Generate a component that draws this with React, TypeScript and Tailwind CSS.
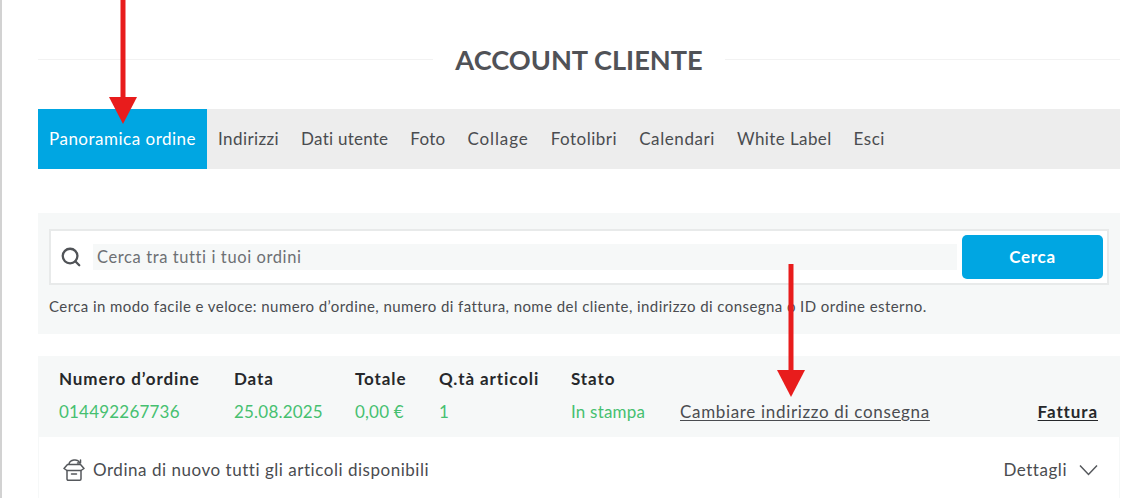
import React from 'react';
import { Search } from 'lucide-react';

const NAV = [
  { label: 'Indirizzi', spacing: 'tracking-[0.4px]' },
  { label: 'Dati utente', spacing: 'tracking-[0.25px]' },
  { label: 'Foto', spacing: 'tracking-[0.25px]' },
  { label: 'Collage', spacing: 'tracking-[0.9px]' },
  { label: 'Fotolibri', spacing: 'tracking-[0.5px]' },
  { label: 'Calendari', spacing: 'tracking-[0.6px]' },
  { label: 'White Label', spacing: 'tracking-[0.4px]' },
  { label: 'Esci', spacing: 'tracking-[0.5px]' },
];

const COLUMNS = [
  { label: 'Numero d’ordine', value: '014492267736', width: 'w-[175px]' },
  { label: 'Data', value: '25.08.2025', width: 'w-[121px]' },
  { label: 'Totale', value: '0,00 €', width: 'w-[84px]' },
  { label: 'Q.tà articoli', value: '1', width: 'w-[132px]' },
  { label: 'Stato', value: 'In stampa', width: 'w-[109px]' },
];

const Arrow = ({ className, h }: { className: string; h: number }) => (
  <svg className={className} viewBox={`0 0 28 ${h}`} fill="#e81c1c">
    <path d={`M11.5 0h5v${h - 27}h-5z`} />
    <path d={`M0 ${h - 27}h28L14 ${h}z`} />
  </svg>
);

const App = () => {
  return (
    <div className="relative h-[498px] w-[1144px] overflow-hidden bg-white font-['Lato',sans-serif] text-[#4a4c50] border-l-2 border-[#d2d2d2]">
      <div className="ml-[36px] w-[1082px]">
        {/* Title */}
        <div className="flex h-[109px] items-center gap-[22px] pt-[10px]">
          <div className="h-[1px] flex-1 bg-[#f2f2f2]" />
          <h1 className="text-[27.2px] font-bold leading-none text-[#505257]">ACCOUNT CLIENTE</h1>
          <div className="h-[1px] flex-1 bg-[#f2f2f2]" />
        </div>

        {/* Tabs */}
        <nav className="flex h-[60px] items-center bg-[#ededed] text-[17px]">
          <a className="flex h-full items-center bg-[#00a6e2] px-[11px] tracking-[0.5px] text-white">Panoramica ordine</a>
          {NAV.map((item) => (
            <a key={item.label} className={`px-[11px] ${item.spacing}`}>{item.label}</a>
          ))}
        </nav>

        {/* Search */}
        <section className="mt-[44px] h-[121px] bg-[#f6f8f8] px-[11px] pt-[16px]">
          <div className="flex h-[56px] items-center border-2 border-[#e8eaea] bg-white">
            <Search className="ml-[9px] h-[22px] w-[22px] text-[#505357]" strokeWidth={2.5} />
            <div className="ml-[11px] flex h-[26px] w-[864px] items-center bg-[#f6f8f8] px-[4px] text-[16.5px] tracking-[0.6px] text-[#6d7074]">
              Cerca tra tutti i tuoi ordini
            </div>
            <button className="ml-[5px] h-[44px] w-[141px] rounded-[5px] bg-[#00a6e2] text-[17px] font-bold tracking-[0.7px] text-white">Cerca</button>
          </div>
          <p className="mt-[11px] text-[15px] leading-[20px] tracking-[0.43px]">
            Cerca in modo facile e veloce: numero d’ordine, numero di fattura, nome del cliente, indirizzo di consegna o ID ordine esterno.
          </p>
        </section>

        {/* Order */}
        <section className="mt-[22px] border-x border-[#f6f8f8]">
          <div className="flex h-[81px] items-stretch bg-[#f6f8f8] pl-[20px] pr-[21px] pt-[13px] text-[17px]">
            {COLUMNS.map((col) => (
              <div key={col.label} className={col.width}>
                <div className="font-bold leading-[20px] tracking-[0.9px] text-[#26282b]">{col.label}</div>
                <div className="mt-[13px] leading-[20px] tracking-[0.2px] text-[#46c070]">{col.value}</div>
              </div>
            ))}
            <div className="flex flex-1 items-start justify-between pt-[33px] leading-[20px]">
              <a className="tracking-[0.67px] underline underline-offset-2">Cambiare indirizzo di consegna</a>
              <a className="font-bold tracking-[0.9px] text-[#26282b] underline underline-offset-2">Fattura</a>
            </div>
          </div>
          <div className="flex h-[61px] items-center justify-between pl-[24px] pr-[21px] pt-[4px] text-[17px] tracking-[0.53px]">
            <div className="flex items-center gap-[8px]">
              <svg className="h-[24px] w-[22px] text-[#55585c]" viewBox="0 0 22 24" fill="none" stroke="currentColor" strokeWidth="1.5" strokeLinejoin="round" strokeLinecap="round">
                <path d="M4 12.5v8.5a1.2 1.2 0 0 0 1.2 1.2h11.6a1.2 1.2 0 0 0 1.2-1.2v-8.5" />
                <path d="M1 10.5l3.5-4h13l3.5 4-3 2H4z" />
                <path d="M8.5 16h5" />
                <path d="M6 6C7 1.5 14.5 0.5 16.5 4.5" />
                <path d="M17.5 2v3h-3" />
              </svg>
              <span>Ordina di nuovo tutti gli articoli disponibili</span>
            </div>
            <div className="flex items-center gap-[12px]">
              <span>Dettagli</span>
              <svg className="h-[12px] w-[19px] text-[#55585c]" viewBox="0 0 19 12" fill="none" stroke="currentColor" strokeWidth="1.5">
                <path d="M1 1.5l8.5 9 8.5-9" />
              </svg>
            </div>
          </div>
        </section>
      </div>

      {/* Annotation arrows */}
      <Arrow className="absolute left-[107px] top-0 h-[124px] w-[28px]" h={124} />
      <Arrow className="absolute left-[775px] top-[264px] h-[133px] w-[28px]" h={133} />
    </div>
  );
};

export default App;
